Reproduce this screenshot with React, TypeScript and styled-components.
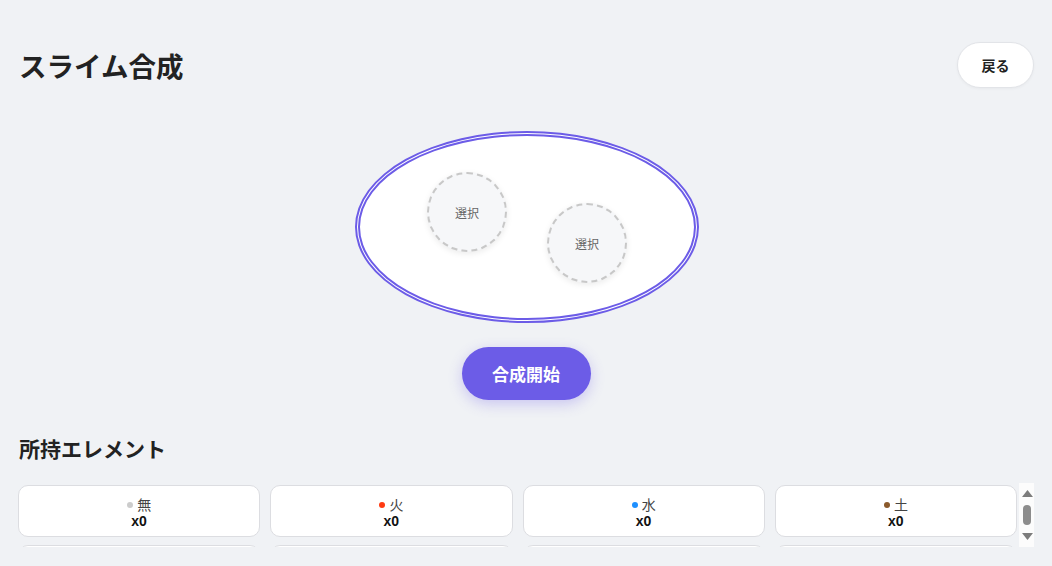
import styled, { createGlobalStyle } from 'styled-components';

const GlobalStyle = createGlobalStyle`
  html, body {
    margin: 0;
    padding: 0;
    background: #f0f2f5;
    font-family: 'Liberation Sans', 'Noto Sans CJK JP', sans-serif;
    color: #222;
  }
`;

const Page = styled.div`
  padding: 42px 18px 0 18px;
  height: 566px;
  box-sizing: border-box;
  overflow: hidden;
`;

const Header = styled.div`
  display: flex;
  justify-content: space-between;
  align-items: center;
`;

const Title = styled.h1`
  margin: 0 0 0 1px;
  font-size: 27.5px;
  font-weight: bold;
  color: #222;
`;

const BackButton = styled.button`
  width: 77px;
  height: 46px;
  border-radius: 23px;
  border: 1px solid #e2e4e8;
  background: #fff;
  font-family: inherit;
  font-size: 14px;
  font-weight: bold;
  color: #222;
  box-shadow: 0 1px 3px rgba(0, 0, 0, 0.04);
`;

const Stage = styled.div`
  display: flex;
  flex-direction: column;
  align-items: center;
  margin-top: 43px;
`;

const Cauldron = styled.div`
  position: relative;
  width: 344px;
  height: 192px;
  box-sizing: border-box;
  border-radius: 50%;
  border: 5px double #6c5ce7;
  background: #fff;
  margin-left: 2px;
`;

const Slot = styled.div<{ $left: number; $top: number }>`
  position: absolute;
  left: ${({ $left }) => $left}px;
  top: ${({ $top }) => $top}px;
  width: 80px;
  height: 80px;
  box-sizing: border-box;
  border-radius: 50%;
  border: 2px dashed #c8c8c8;
  background: #f6f7f9;
  box-shadow: 0 2px 6px rgba(0, 0, 0, 0.08);
  display: flex;
  align-items: center;
  justify-content: center;
  font-size: 12px;
  color: #666;
`;

const FuseButton = styled.button`
  margin-top: 24px;
  width: 129px;
  height: 53px;
  border: none;
  border-radius: 27px;
  background: #6c5ce7;
  color: #fff;
  font-family: inherit;
  font-size: 17px;
  font-weight: bold;
  box-shadow: 0 4px 14px rgba(108, 92, 231, 0.3);
`;

const SectionTitle = styled.h2`
  margin: 33px 0 0 1px;
  font-size: 21px;
  font-weight: bold;
  color: #222;
`;

const Inventory = styled.div`
  margin-top: 20px;
  display: flex;
  gap: 2px;
  height: 64px;
`;

const List = styled.div`
  flex: 1;
  height: 64px;
  box-sizing: border-box;
  padding-top: 2px;
  overflow: hidden;
  clip-path: inset(0);
`;

const ScrollBar = styled.div`
  width: 15px;
  box-sizing: border-box;
  padding: 7px 0;
  background: #fcfcfc;
  display: flex;
  flex-direction: column;
  align-items: center;
  justify-content: space-between;
`;

const Thumb = styled.div`
  width: 8px;
  height: 20px;
  border-radius: 4px;
  background: #8c8c8c;
  margin-left: 1px;
`;

const Grid = styled.div`
  display: grid;
  grid-template-columns: repeat(4, 1fr);
  gap: 8px 10px;
`;

const ElementCard = styled.div`
  height: 52px;
  box-sizing: border-box;
  padding-top: 3px;
  border: 1px solid #dcdde1;
  border-radius: 10px;
  background: #fff;
  display: flex;
  flex-direction: column;
  align-items: center;
  justify-content: center;
  font-size: 14px;
  line-height: 16px;
`;

const NameRow = styled.div`
  display: flex;
  align-items: center;
  gap: 4px;
  color: #444;
`;

const Dot = styled.span<{ $color: string }>`
  width: 6px;
  height: 6px;
  border-radius: 50%;
  background: ${({ $color }) => $color};
`;

const Count = styled.div`
  font-weight: bold;
  color: #111;
`;

const elements = [
  { name: '無', color: '#cccccc' },
  { name: '火', color: '#ff3b12' },
  { name: '水', color: '#1e90ff' },
  { name: '土', color: '#8b5a2b' },
  { name: '風', color: '#7ed957' },
  { name: '雷', color: '#ffd000' },
  { name: '光', color: '#fff1a8' },
  { name: '闇', color: '#5b3a8c' },
];

const Arrow = ({ down }: { down?: boolean }) => (
  <svg width="11" height="7" viewBox="0 0 11 7" style={{ marginLeft: 1 }}>
    <polygon points={down ? '0,0 11,0 5.5,7' : '0,7 11,7 5.5,0'} fill="#7c7c7c" />
  </svg>
);

const App = () => (
  <>
    <GlobalStyle />
    <Page>
      <Header>
        <Title>スライム合成</Title>
        <BackButton>戻る</BackButton>
      </Header>
      <Stage>
        <Cauldron>
          <Slot $left={67} $top={36}>選択</Slot>
          <Slot $left={187} $top={67}>選択</Slot>
        </Cauldron>
        <FuseButton>合成開始</FuseButton>
      </Stage>
      <SectionTitle>所持エレメント</SectionTitle>
      <Inventory>
        <List>
          <Grid>
            {elements.map((el) => (
              <ElementCard key={el.name}>
                <NameRow>
                  <Dot $color={el.color} />
                  {el.name}
                </NameRow>
                <Count>x0</Count>
              </ElementCard>
            ))}
          </Grid>
        </List>
        <ScrollBar>
          <Arrow />
          <Thumb />
          <Arrow down />
        </ScrollBar>
      </Inventory>
    </Page>
  </>
);

export default App;
